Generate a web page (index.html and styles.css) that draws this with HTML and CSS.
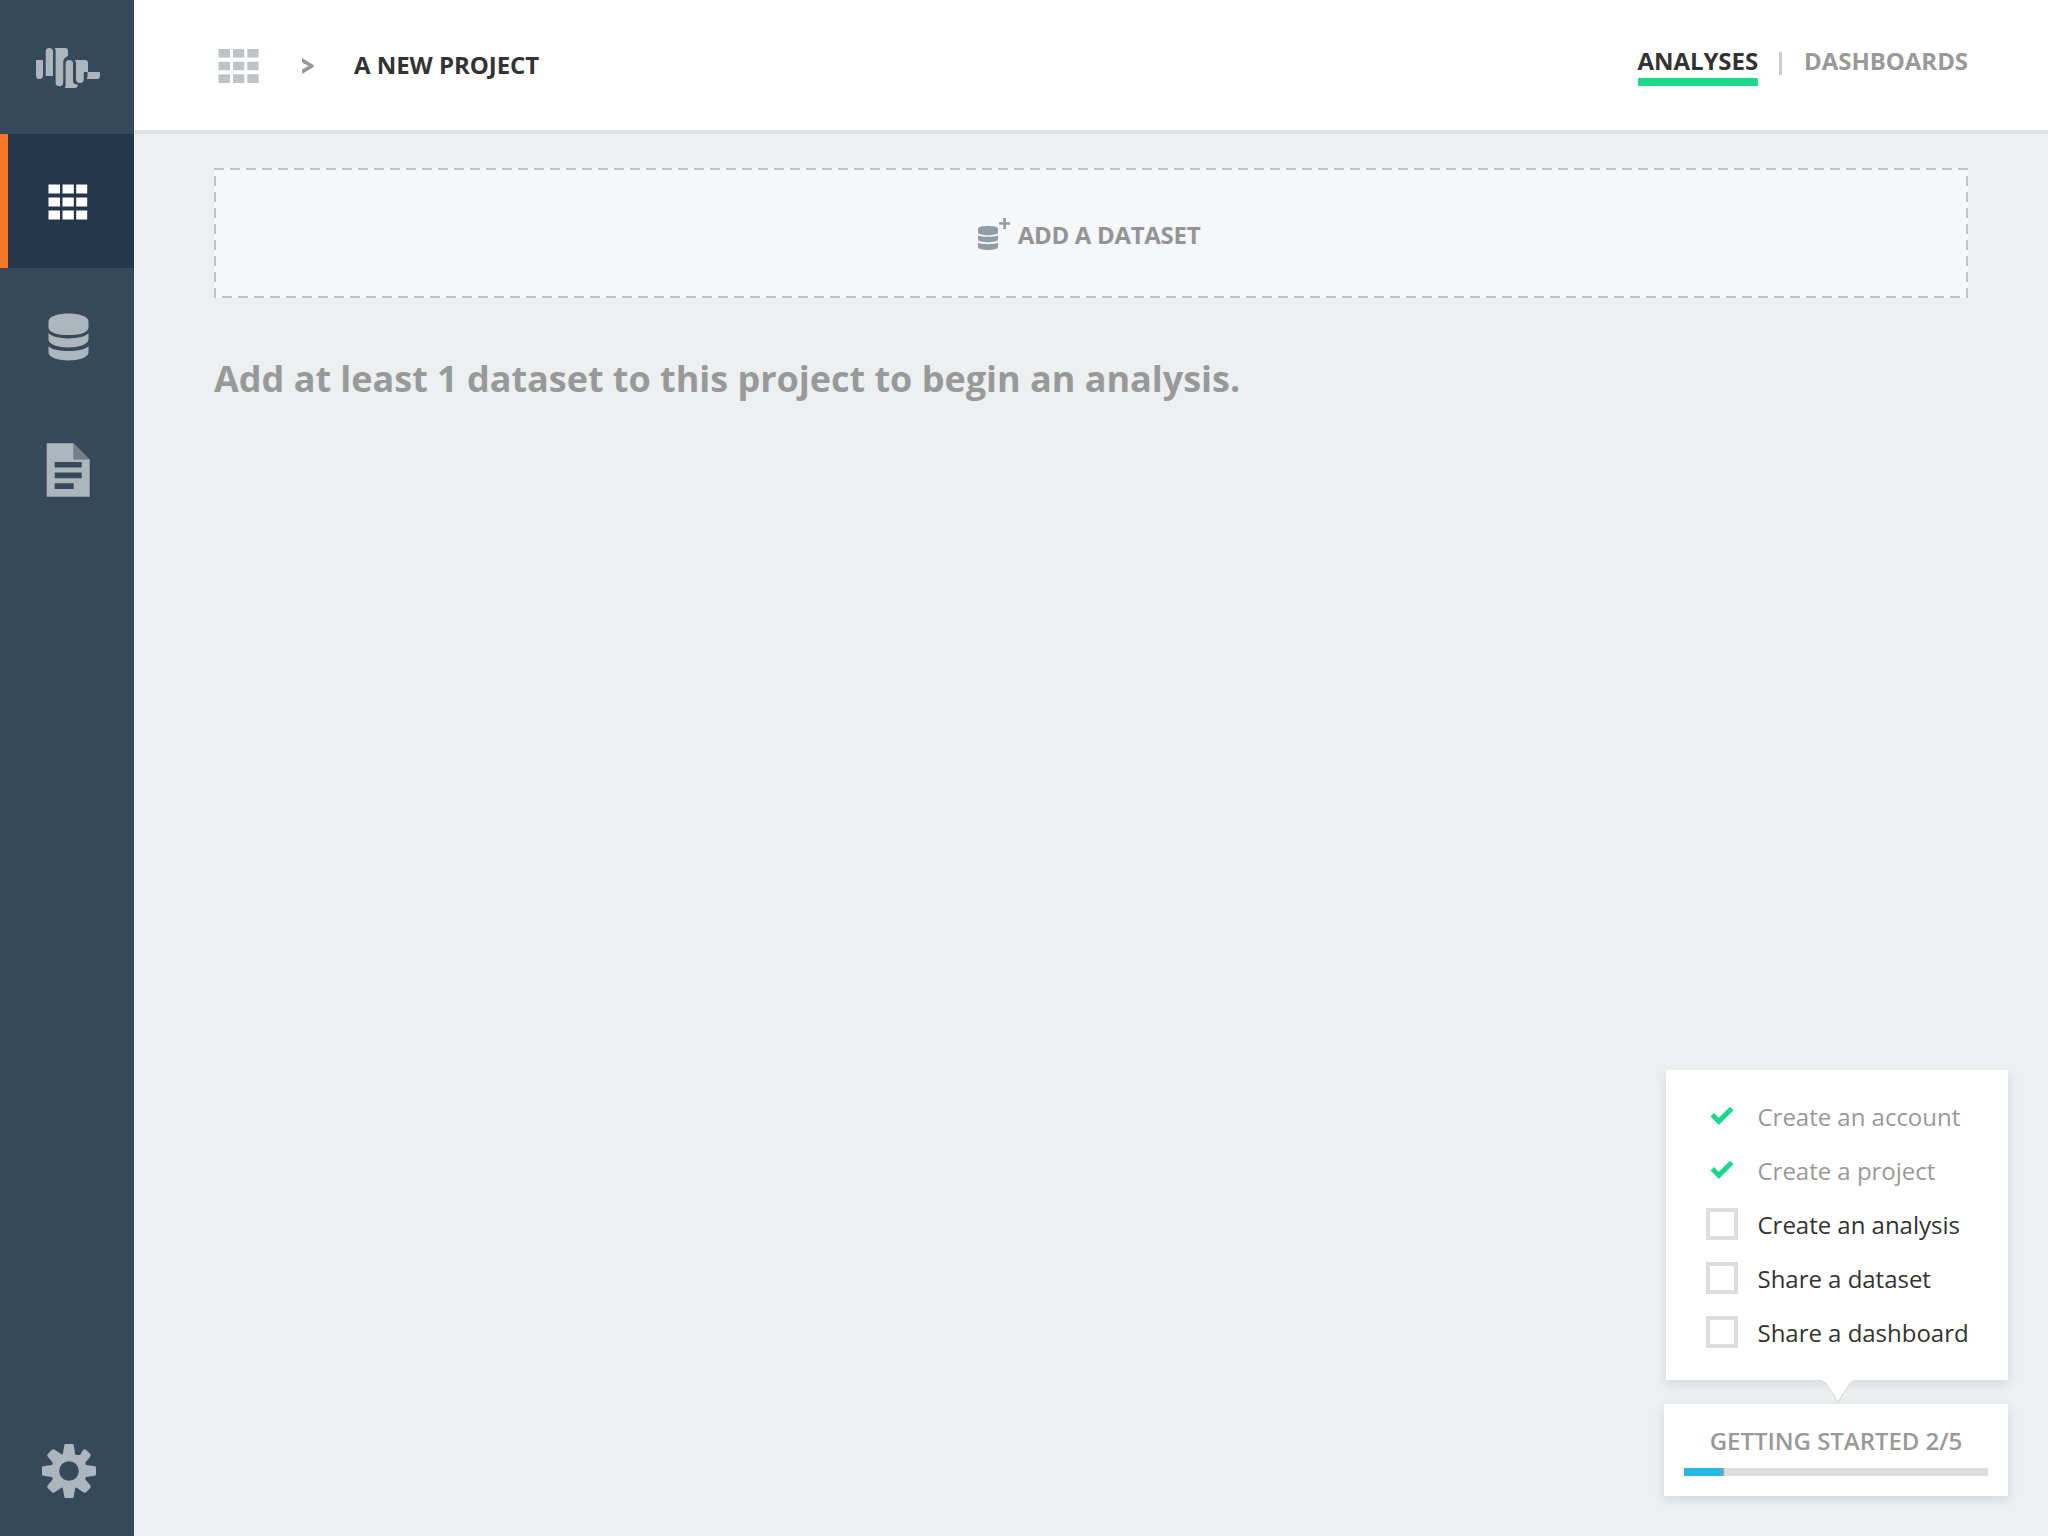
FILE: index.html
```html
<!DOCTYPE html>
<html lang="en">
<head>
<meta charset="utf-8">
<title>A New Project</title>
<link rel="stylesheet" href="styles.css">
</head>
<body>
<div class="app">
  <nav class="sidebar">
    <a class="nav-item"><svg class="nav-icon" viewBox="0 0 134 134">
      <path d="M36 61q0-1 1-1h6v15.500a3.500 3.500 0 0 1-7 0z"/>
      <path d="M45.700 51.700a3.650 3.650 0 0 1 7.300 0V76h-7.800q.5-1 .5-2z"/>
      <path d="M54.600 48H65q3 0 3 3v4q0 1-1 1.500-3.800 2-3.800 6V82.500a3.800 3.800 0 0 1-7.600 0V51q0-2-1-3z"/>
      <path d="M65.600 63.700a3.700 3.700 0 0 1 7.400 0V81q0 3 4 3.500 1 0 .8 1-.6 2.500-2.800 2.500H64.600q1-1 1-3z"/>
      <path d="M74.600 60H85q3 0 3 3v9h-3.500q-.7 0-.7 1v6a3.900 3.900 0 0 1-7.800 0V63q0-2-1.400-3z"/>
      <path d="M87.500 72H100v4q0 3-3 3H86.500q1-1 1-3z"/>
    </svg></a>
    <a class="nav-item nav-item-active"><svg class="nav-icon" viewBox="0 0 134 134">
      <path d="M48.500 50.500H60v9H48.500zM62.500 50.500h11.300v9H62.500zM76.200 50.500h11v9h-11zM48.500 63.500H60v9H48.500zM62.500 63.500h11.300v9H62.500zM76.200 63.500h11v9h-11zM48.500 76.500H60v9H48.500zM62.500 76.500h11.300v9H62.500zM76.200 76.500h11v9h-11z"/>
    </svg></a>
    <a class="nav-item"><svg class="nav-icon" viewBox="0 0 134 134">
      <g transform="translate(0 .4)">
        <path d="M48.500 53C48.500 47.500 59 45 68.500 45S88.500 47.500 88.500 53v6c0 5.500-10.500 7.700-20 7.700s-20-2.200-20-7.700z"/>
        <path d="M48.500 64.700c2.500 3.600 11 5.300 20 5.300s17.500-1.700 20-5.300v6.500c0 5-10.500 8-20 8s-20-3-20-8z"/>
        <path d="M48.500 77.500c2.500 3.600 11 5 20 5s17.500-1.400 20-5V84c0 5-10.500 8-20 8s-20-3-20-8z"/>
      </g>
    </svg></a>
    <a class="nav-item"><svg class="nav-icon" viewBox="0 0 134 134">
      <path fill-rule="evenodd" d="M46.700 41.300h27v16H89.700V94.800h-43zM54.700 60v5.600h27V60zM54.700 70.600v5.600h27v-5.600zM54.700 81.200v5.700h19v-5.700z"/>
      <path class="fold" d="M73.700 41.300l16 16h-16z"/>
    </svg></a>
    <a class="nav-item nav-item-bottom"><svg class="nav-icon" viewBox="0 0 134 134">
      <g transform="translate(69 69)">
        <path fill-rule="evenodd" d="M-3.500-27h7q1 0 1.200 1L6.200-16.500q4 1 5 .200L14-21Q15.500-22.500 17-21.300L21.300-17Q22.500-15.500 21-14L16.200-8.200Q16.500-7 17-6L26-4.700q1 .2 1 1.200v7q0 1-1 1.200L17 6q-.5 1-.8 2.200L21 14q1.500 1.500.3 3L17 21.300Q15.500 22.500 14 21L7.200 16.500 6.200 17 4.700 26q-.2 1-1.200 1h-7q-1 0-1.200-1L-6.200 17l-1-.5L-14 21q-1.500 1.500-3 .3L-21.300 17q-1.200-1.500.3-3l4.800-5.800Q-16.500 7-17 6L-26 4.700q-1-.2-1-1.200v-7q0-1 1-1.200L-17-6q.5-1 .8-2.200L-21-14q-1.500-1.500-.3-3L-17-21.300q1.500-1.200 3 .3l6.800 4.500 1-.5L-4.700-26q.2-1 1.200-1zM0-9.800A9.800 9.800 0 1 0 0 9.800 9.800 9.800 0 1 0 0-9.800z"/>
      </g>
    </svg></a>
  </nav>
  <div class="page">
    <header class="topbar">
      <div class="breadcrumb">
        <svg class="crumb-grid" viewBox="0 0 42 36">
          <path d="M.5 0H12v8.500H.5zM15 0h11.300v8.500H15zM29.300 0h11.300v8.500H29.300zM.5 12.700H12v8.600H.5zM15 12.700h11.300v8.600H15zM29.300 12.700h11.300v8.600H29.300zM.5 25.300H12V34H.5zM15 25.300h11.300V34H15zM29.300 25.300h11.300V34H29.300z"/>
        </svg>
        <svg class="crumb-arrow" viewBox="0 0 12 16"><path d="M0 0L11.700 6.900V9L0 16V11.400L6.600 8 0 4.600z"/></svg>
        <h1 class="crumb-title">A NEW PROJECT</h1>
      </div>
      <div class="tabs">
        <a class="tab tab-active">ANALYSES</a>
        <span class="tab-divider"></span>
        <a class="tab">DASHBOARDS</a>
      </div>
    </header>
    <main class="content">
      <div class="add-dataset">
        <svg class="add-icon" viewBox="0 0 32 32">
          <path d="M0 10.500C0 8.800 5 8 10 8s10 .8 10 2.500v4c0 1.700-5 2.700-10 2.700S0 16.200 0 14.500z"/>
          <path d="M0 17.500c2 1 6 1.300 10 1.300s8-.3 10-1.300v4.200c0 1.500-5 2.500-10 2.500S0 23.200 0 21.700z"/>
          <path d="M0 24.800c2 1 6 1.400 10 1.400s8-.4 10-1.400v4.500c0 1.700-5 2.700-10 2.700S0 31 0 29.300z"/>
          <path d="M25.300 0h2.700v4.200h4v2.600h-4V11h-2.700V6.800h-4.200V4.200h4.200z"/>
        </svg>
        <span class="add-label">ADD A DATASET</span>
      </div>
      <h2 class="hint">Add at least 1 dataset to this project to begin an analysis.</h2>
    </main>
  </div>
  <aside class="guide">
    <ul class="steps">
      <li class="step step-done"><span class="mark"><svg class="check" viewBox="0 0 24 20"><path d="M.5 10.500L4 7l4.800 4.800L20 .7l3.500 3.500L8.800 19z"/></svg></span><span class="step-text">Create an account</span></li>
      <li class="step step-done"><span class="mark"><svg class="check" viewBox="0 0 24 20"><path d="M.5 10.500L4 7l4.800 4.800L20 .7l3.500 3.500L8.800 19z"/></svg></span><span class="step-text">Create a project</span></li>
      <li class="step"><span class="mark box"></span><span class="step-text">Create an analysis</span></li>
      <li class="step"><span class="mark box"></span><span class="step-text">Share a dataset</span></li>
      <li class="step"><span class="mark box"></span><span class="step-text">Share a dashboard</span></li>
    </ul>
    <svg class="pointer" viewBox="0 0 36 24"><path class="pointer-edge" d="M0 0Q4 1 6 4L18 23.500 30 4Q32 1 36 0z"/><path class="pointer-fill" d="M1 0Q5 1 7 4L18 21 29 4Q31 1 35 0z"/></svg>
    <div class="progress-card">
      <span class="progress-label">GETTING STARTED 2/5</span>
      <div class="progress"><div class="progress-value"></div></div>
    </div>
  </aside>
</div>
</body>
</html>
```
FILE: styles.css
```css
* { box-sizing: border-box; }
body {
  margin: 0;
  font-family: "Open Sans", "Noto Sans", sans-serif;
  font-size: 24px;
  line-height: 32px;
  color: #333;
  background: #ecf0f1;
}
h1, h2, ul { margin: 0; padding: 0; font-size: inherit; }
svg { display: block; flex: none; }

.app { display: flex; height: 100vh; min-height: 900px; }

.sidebar {
  display: flex;
  flex-direction: column;
  flex: none;
  width: 134px;
  background: #36495a;
}
.nav-item { height: 134px; }
.nav-icon { width: 134px; height: 134px; fill: #adb5bd; }
.nav-item-active { background: #23374a; box-shadow: inset 8px 0 #f57529; }
.nav-item-active .nav-icon { fill: #fff; }
.nav-item-bottom { margin-top: auto; }
.fold { fill: #72808d; }

.page { flex: 1; min-width: 0; }

.topbar {
  display: flex;
  justify-content: space-between;
  height: 134px;
  padding: 0 80px 0 84px;
  background: #fff;
  border-bottom: 4px solid #dee2e2;
}
.breadcrumb { display: flex; align-items: flex-start; padding-top: 49px; }
.crumb-grid { width: 42px; height: 36px; fill: #bdc3c6; }
.crumb-arrow { width: 12px; height: 16px; margin: 9px 40px 0 42px; fill: #999; }
.crumb-title { font-weight: 700; letter-spacing: -.05px; white-space: nowrap; }

.tabs { display: flex; align-items: flex-start; padding-top: 45px; font-weight: 700; letter-spacing: -.06px; }
.tab { height: 41px; color: #999; }
.tab-active { color: #333; border-bottom: 8px solid #1bd88b; }
.tab-divider { width: 3px; height: 23px; margin: 7px 22px 0 21px; background: #ccc; }

.content { padding: 34px 80px 0; }
/* 10px dashes on a 16px pitch, wider than a native dashed border gives */
.add-dataset {
  display: flex;
  justify-content: center;
  gap: 8px;
  height: 130px;
  padding: 50px 4px 0 0;
  background:
    repeating-linear-gradient(90deg, #c2c4c6 0 10px, transparent 10px 16px) 0 0 / 100% 2px no-repeat,
    repeating-linear-gradient(90deg, #c2c4c6 0 10px, transparent 10px 16px) 8px 100% / 100% 2px no-repeat,
    repeating-linear-gradient(180deg, #c2c4c6 0 10px, transparent 10px 16px) 0 8px / 2px 100% no-repeat,
    repeating-linear-gradient(180deg, #c2c4c6 0 10px, transparent 10px 16px) 100% 8px / 2px 100% no-repeat,
    #f5f7f9;
}
.add-icon { width: 32px; height: 32px; fill: #919ca6; }
.add-label { padding-top: 1px; font-weight: 700; letter-spacing: -.3px; color: #949494; }
.hint {
  padding-top: 56px;
  font-size: 36px;
  line-height: 50px;
  font-weight: 700;
  letter-spacing: -.02px;
  color: #999;
}

.guide {
  position: absolute;
  right: 40px;
  bottom: 40px;
  display: flex;
  flex-direction: column;
  align-items: flex-end;
}
.steps {
  display: flex;
  flex-direction: column;
  gap: 22px;
  width: 342px;
  height: 310px;
  padding: 30px 0 0 40px;
  list-style: none;
  background: #fff;
  box-shadow: 0 4px 10px rgba(0, 0, 0, .1);
}
.step { display: flex; gap: 19.5px; height: 32px; white-space: nowrap; letter-spacing: -.02px; }
.step-done { color: #999; }
.step-text { padding-top: 1px; }
.mark { flex: none; width: 32px; height: 32px; padding: 6px 0 0 4px; }
.box { border: 4px solid #ddd; }
.check { width: 24px; height: 20px; fill: #1bd88b; }
.pointer { position: relative; width: 36px; height: 24px; margin-right: 152px; }
.pointer-edge { fill: #d9dcdc; }
.pointer-fill { fill: #fff; }
.progress-card {
  display: flex;
  flex-direction: column;
  align-items: center;
  width: 344px;
  height: 92px;
  padding: 21px 20px 20px;
  background: #fff;
  box-shadow: 0 4px 10px rgba(0, 0, 0, .1);
}
.progress-label { font-weight: 600; letter-spacing: -.04px; color: #999; white-space: nowrap; }
.progress { width: 100%; height: 8px; margin-top: 11px; background: #ddd; }
.progress-value { width: 40px; height: 8px; background: #29b6e8; border-right: 2px solid #999; }
```
